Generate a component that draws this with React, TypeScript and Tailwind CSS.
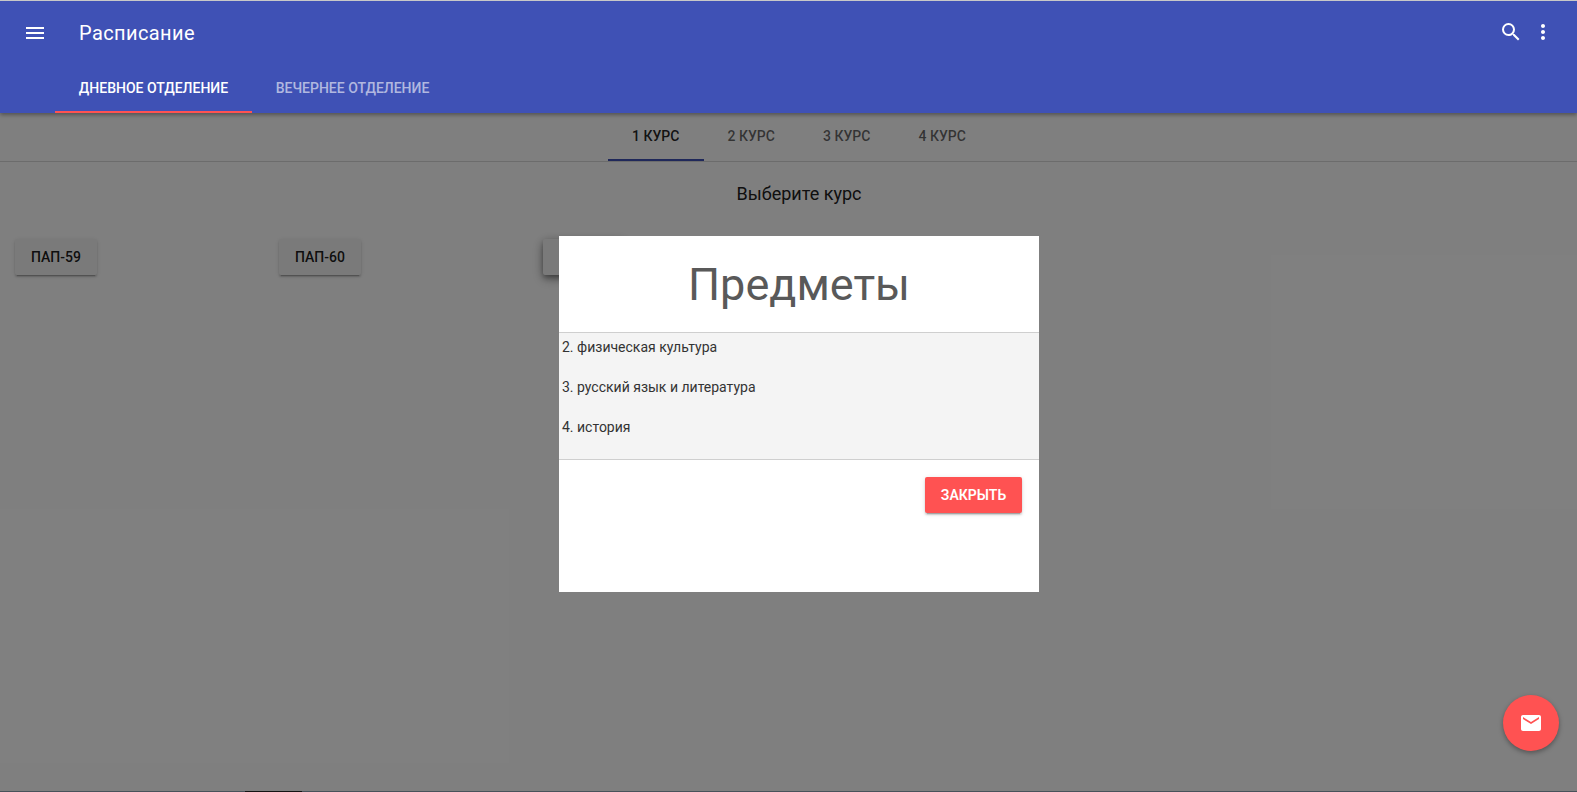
const courses = ["1 КУРС", "2 КУРС", "3 КУРС", "4 КУРС"];
const subjects = ["2. физическая культура", "3. русский язык и литература", "4. история"];

function GroupButton({ label, raised }: { label: string; raised?: boolean }) {
  return (
    <div className="w-[264px]">
      <button
        className={`h-9 w-[82px] rounded-[2px] bg-[#f5f5f5] text-sm font-medium text-black/90 ${
          raised
            ? "shadow-[0_4px_5px_0_rgba(0,0,0,0.14),0_1px_10px_0_rgba(0,0,0,0.12),0_2px_4px_-1px_rgba(0,0,0,0.2),0_4px_12px_rgba(0,0,0,0.3)]"
            : "shadow-[0_2px_2px_0_rgba(0,0,0,0.14),0_3px_1px_-2px_rgba(0,0,0,0.2),0_1px_5px_0_rgba(0,0,0,0.12)]"
        }`}
      >
        {label}
      </button>
    </div>
  );
}

export default function App() {
  return (
    <div className="relative h-[792px] w-full overflow-hidden bg-white font-['Roboto',sans-serif] text-[#212121]">
      <header className="relative z-20 h-[113px] border-t border-[#c8c8c8] bg-[#3f51b5] text-white shadow-[0_2px_4px_rgba(0,0,0,0.35)]">
        <div className="flex h-[64px] items-center">
          <svg viewBox="0 0 24 24" className="ml-[23px] size-6 fill-white">
            <path d="M3 18h18v-2H3v2zm0-5h18v-2H3v2zm0-7v2h18V6H3z" />
          </svg>
          <h1 className="ml-8 text-xl leading-none tracking-[0.02em]">Расписание</h1>
          <div className="mb-[2px] ml-auto mr-[22px] flex items-center gap-2">
            <svg viewBox="0 0 24 24" className="size-6 fill-white">
              <path d="M15.5 14h-.79l-.28-.27A6.471 6.471 0 0 0 16 9.5 6.5 6.5 0 1 0 9.5 16c1.61 0 3.09-.59 4.23-1.57l.27.28v.79l5 4.99L20.49 19l-4.99-5zm-6 0C7.01 14 5 11.99 5 9.5S7.01 5 9.5 5 14 7.01 14 9.5 11.99 14 9.5 14z" />
            </svg>
            <svg viewBox="0 0 24 24" className="size-6 fill-white">
              <path d="M12 8c1.1 0 2-.9 2-2s-.9-2-2-2-2 .9-2 2 .9 2 2 2zm0 2c-1.1 0-2 .9-2 2s.9 2 2 2 2-.9 2-2-.9-2-2-2zm0 6c-1.1 0-2 .9-2 2s.9 2 2 2 2-.9 2-2-.9-2-2-2z" />
            </svg>
          </div>
        </div>
        <nav className="ml-[55px] flex h-[48px] text-sm font-medium">
          <a className="flex h-full w-[197px] items-center justify-center border-b-2 border-[#ff5252]">
            ДНЕВНОЕ ОТДЕЛЕНИЕ
          </a>
          <a className="flex h-full w-[201px] items-center justify-center border-b-2 border-transparent text-white/60">
            ВЕЧЕРНЕЕ ОТДЕЛЕНИЕ
          </a>
        </nav>
      </header>

      <main>
        <div className="flex h-[49px] justify-center border-b border-[#d9d9d9] pl-[21px]">
          {courses.map((course, i) => (
            <a
              key={course}
              className={`flex h-[48px] w-[95.5px] items-center justify-center border-b-2 text-sm font-medium ${
                i === 0 ? "border-[#3f51b5] text-black/87" : "border-transparent text-black/60"
              }`}
            >
              {course}
            </a>
          ))}
        </div>
        <p className="mt-5 pl-[21px] text-center text-lg leading-6">Выберите курс</p>
        <div className="mt-[33px] flex pl-[15px]">
          <GroupButton label="ПАП-59" />
          <GroupButton label="ПАП-60" />
          <GroupButton label="ПАП-61" raised />
        </div>
      </main>

      <div className="absolute inset-0 z-10 bg-black/50" />

      <button className="absolute bottom-[41px] right-[18px] z-10 flex size-14 items-center justify-center rounded-full bg-[#ff5252] text-white shadow-[0_2px_5px_rgba(0,0,0,0.35)]">
        <svg viewBox="0 0 24 24" className="size-6 fill-white">
          <path d="M20 4H4c-1.1 0-1.99.9-1.99 2L2 18c0 1.1.9 2 2 2h16c1.1 0 2-.9 2-2V6c0-1.1-.9-2-2-2zm0 4-8 5-8-5V6l8 5 8-5v2z" />
        </svg>
      </button>

      <div className="absolute left-[559px] top-[236px] z-30 h-[356px] w-[480px] bg-white">
        <h2 className="h-[97px] border-b border-[#cfcfcf] text-center text-[45px] leading-[97px] text-[#595959]">
          Предметы
        </h2>
        <div className="h-[127px] border-b border-[#cfcfcf] bg-[#f4f4f4] px-[3px] pt-1 text-sm leading-5">
          {subjects.map((subject) => (
            <p key={subject} className="mb-5 text-[#333]">
              {subject}
            </p>
          ))}
        </div>
        <div className="flex justify-end pr-[17px] pt-[17px]">
          <button className="h-9 w-[97px] rounded-[2px] bg-[#ff5252] text-sm font-semibold text-white shadow-[0_2px_2px_0_rgba(0,0,0,0.14),0_3px_1px_-2px_rgba(0,0,0,0.2),0_1px_5px_0_rgba(0,0,0,0.12)]">
            ЗАКРЫТЬ
          </button>
        </div>
      </div>

      <div className="absolute bottom-0 left-0 z-30 flex h-px w-full bg-[#48525a]">
        <div className="ml-[245px] h-px w-[57px] bg-[#141414]" />
      </div>
    </div>
  );
}
